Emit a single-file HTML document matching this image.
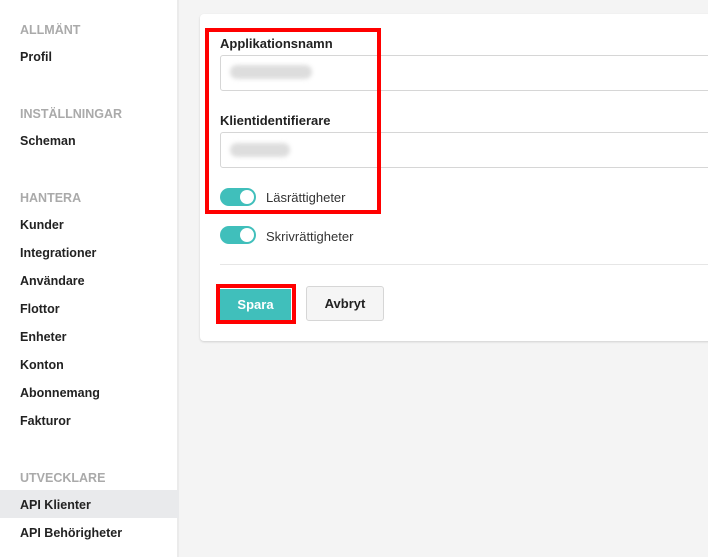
<!DOCTYPE html><html><head><meta charset="utf-8"><style>
*{margin:0;padding:0;box-sizing:border-box}
body{width:708px;height:557px;overflow:hidden;font-family:"Liberation Sans",sans-serif;background:#f4f4f4;position:relative;font-size:13px;color:#222}
.sb{position:absolute;left:0;top:0;width:179px;height:557px;background:#fff;border-right:2px solid #ebebeb}
.sb div.t{position:absolute;left:20px;font-weight:bold;font-size:12.5px}
.sb .h{color:#aaa;font-weight:bold;font-size:12px}
.sb div.sel{position:absolute;left:0;top:490px;width:179px;height:28px;background:#e9eaec}
.card{position:absolute;left:200px;top:14px;width:520px;height:327px;background:#fff;border-radius:4px;box-shadow:0 1px 2px rgba(0,0,0,.15)}
.abs{position:absolute}
.lbl{font-weight:bold;font-size:13px}
.inp{position:absolute;left:220px;width:500px;height:36px;border:1px solid #d6d6d6;border-radius:3px;background:#fff}
.blur{position:absolute;height:14px;border-radius:7px;background:#ddd;filter:blur(2px)}
.tg{position:absolute;left:220px;width:36px;height:18px;border-radius:9px;background:#40bfbb}
.tg::after{content:"";position:absolute;right:2px;top:2px;width:14px;height:14px;border-radius:50%;background:#fff}
.red{position:absolute;border:4px solid #f00}
</style></head><body>
<div class="sb">
<div class="sel"></div>
<div class="t h" style="top:23px">ALLMÄNT</div>
<div class="t" style="top:50px">Profil</div>
<div class="t h" style="top:107px">INSTÄLLNINGAR</div>
<div class="t" style="top:134px">Scheman</div>
<div class="t h" style="top:191px">HANTERA</div>
<div class="t" style="top:218px">Kunder</div>
<div class="t" style="top:246px">Integrationer</div>
<div class="t" style="top:274px">Användare</div>
<div class="t" style="top:302px">Flottor</div>
<div class="t" style="top:330px">Enheter</div>
<div class="t" style="top:358px">Konton</div>
<div class="t" style="top:386px">Abonnemang</div>
<div class="t" style="top:414px">Fakturor</div>
<div class="t h" style="top:471px">UTVECKLARE</div>
<div class="t" style="top:498px">API Klienter</div>
<div class="t" style="top:526px">API Behörigheter</div>
</div>
<div class="card"></div>
<div class="abs lbl" style="left:220px;top:36px">Applikationsnamn</div>
<div class="inp" style="top:55px"></div>
<div class="blur" style="left:230px;top:65px;width:82px"></div>
<div class="abs lbl" style="left:220px;top:113px">Klientidentifierare</div>
<div class="inp" style="top:132px"></div>
<div class="blur" style="left:230px;top:143px;width:60px"></div>
<div class="tg" style="top:188px"></div>
<div class="abs" style="left:266px;top:190px;color:#333">Läsrättigheter</div>
<div class="tg" style="top:226px"></div>
<div class="abs" style="left:266px;top:229px;color:#333">Skrivrättigheter</div>
<div class="abs" style="left:220px;top:264px;width:488px;height:1px;background:#e6e6e6"></div>
<div class="abs" style="left:220px;top:289px;width:71px;height:31px;background:#40bfbb;color:#fff;font-weight:bold;text-align:center;line-height:31px">Spara</div>
<div class="abs" style="left:306px;top:286px;width:78px;height:35px;background:#f5f5f5;border:1px solid #d6d6d6;border-radius:3px;font-weight:bold;text-align:center;line-height:33px">Avbryt</div>
<div class="red" style="left:205px;top:28px;width:176px;height:186px"></div>
<div class="red" style="left:216px;top:284px;width:80px;height:40px"></div>
</body></html>
